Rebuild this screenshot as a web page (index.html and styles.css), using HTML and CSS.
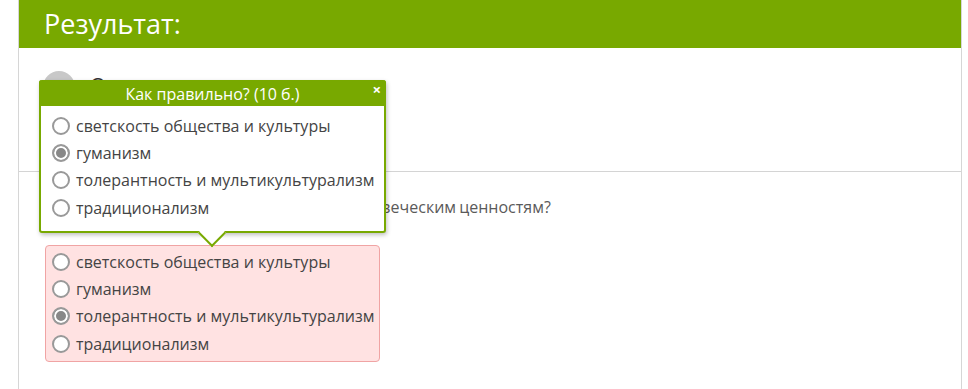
FILE: index.html
```html
<!DOCTYPE html>
<html lang="ru">
<head>
  <meta charset="UTF-8">
  <title>Результат теста</title>
  <link rel="stylesheet" href="styles.css">
</head>
<body>
  <div class="result">
    <div class="result-head">Результат:</div>

    <div class="summary">
      <span class="score-badge"></span>
      <span class="summary-text">Ответ неверен</span>
    </div>

    <div class="question">
      <p class="question-text">Какой из принципов относится к общечеловеческим ценностям?</p>
      <div class="answers wrong">
        <label class="option"><span class="radio"></span>светскость общества и культуры</label>
        <label class="option"><span class="radio"></span>гуманизм</label>
        <label class="option"><span class="radio checked"></span>толерантность и мультикультурализм</label>
        <label class="option"><span class="radio"></span>традиционализм</label>
      </div>
    </div>

    <!-- correct answer tooltip -->
    <div class="hint">
      <div class="hint-title">Как правильно? (10 б.)<span class="hint-close">×</span></div>
      <div class="hint-body">
        <label class="option"><span class="radio"></span>светскость общества и культуры</label>
        <label class="option"><span class="radio checked"></span>гуманизм</label>
        <label class="option"><span class="radio"></span>толерантность и мультикультурализм</label>
        <label class="option"><span class="radio"></span>традиционализм</label>
      </div>
      <span class="hint-arrow"></span>
    </div>
  </div>
</body>
</html>
```

FILE: styles.css
```css
body {
  margin: 0;
  font-family: "Open Sans", "Noto Sans", sans-serif;
  background: #fff;
  color: #444;
}
.result {
  position: relative;
  margin-left: 18px;
  width: 942px;
  height: 389px;
  border-left: 1px solid #d6d6d6;
  border-right: 1px solid #d6d6d6;
}
.result-head {
  height: 48px;
  box-sizing: border-box;
  padding: 5px 0 0 25px;
  background: #78a900;
  color: #fff;
  font-size: 27px;
  line-height: 38px;
}
.summary {
  height: 124px;
  box-sizing: border-box;
  padding: 23px 0 0 24px;
  display: flex;
  align-items: flex-start;
  gap: 15px;
  border-bottom: 1px solid #d4d4d4;
}
.score-badge {
  width: 32px;
  height: 32px;
  border-radius: 50%;
  background: #c8c8c8;
}
.summary-text {
  font-size: 20px;
  line-height: 28px;
  color: #333;
}
.question {
  padding: 24px 0 0 26px;
}
.question-text {
  margin: 0 0 27px;
  font-size: 16px;
  line-height: 22px;
  word-spacing: -1px;
  color: #5a5a5a;
}
.answers {
  width: 335px;
  box-sizing: border-box;
  padding: 2px 0 3px 6px;
  border-radius: 4px;
}
.answers.wrong {
  background: #ffe2e2;
  border: 1px solid #f0a4a4;
}
.option {
  display: flex;
  align-items: center;
  gap: 6px;
  height: 27.4px;
  font-size: 16px;
  color: #444;
}
.radio {
  width: 18px;
  height: 18px;
  box-sizing: border-box;
  border: 2px solid #999;
  border-radius: 50%;
  background: #fff;
  flex: none;
}
.radio.checked {
  background: #888;
  box-shadow: inset 0 0 0 2px #fff;
}
.hint {
  position: absolute;
  left: 20px;
  top: 80px;
  width: 343px;
  border: 2px solid #78a900;
  border-top: none;
  border-radius: 3px;
  background: #fff;
  box-shadow: 1px 2px 4px rgba(0, 0, 0, 0.25);
}
.hint-title {
  position: relative;
  height: 26px;
  margin: 0 -2px;
  border-radius: 3px 3px 0 0;
  background: #78a900;
  color: #fff;
  font-size: 16px;
  line-height: 28px;
  text-align: center;
}
.hint-close {
  position: absolute;
  right: 5px;
  top: -5px;
  font-size: 15px;
  font-weight: bold;
}
.hint-body {
  padding: 6px 0 9px 11px;
}
.hint-arrow {
  position: absolute;
  left: 161px;
  bottom: -12px;
  width: 20px;
  height: 20px;
  box-sizing: border-box;
  background: #fff;
  border-right: 2px solid #78a900;
  border-bottom: 2px solid #78a900;
  transform: rotate(45deg);
}
```
